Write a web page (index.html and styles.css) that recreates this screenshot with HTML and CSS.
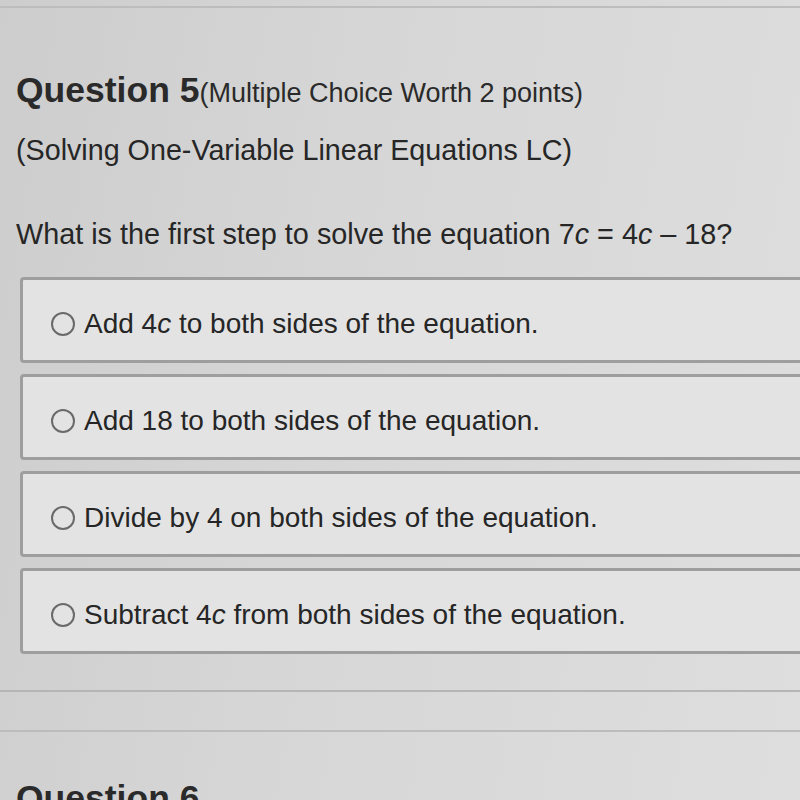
FILE: index.html
```html
<!DOCTYPE html>
<html lang="en">
<head>
  <meta charset="UTF-8">
  <title>Question 5</title>
  <link rel="stylesheet" href="styles.css">
</head>
<body>

  <div class="page">
    <div class="top-rule"></div>

    <div class="question">
      <h2 class="q-title">Question 5<span class="q-worth">(Multiple Choice Worth 2 points)</span></h2>
      <p class="q-topic">(Solving One-Variable Linear Equations LC)</p>

      <p class="q-text">What is the first step to solve the equation 7<i>c</i> = 4<i>c</i> &ndash; 18?</p>

      <div class="options">
        <label class="option">
          <span class="radio"></span>
          <span>Add 4<i>c</i> to both sides of the equation.</span>
        </label>
        <label class="option">
          <span class="radio"></span>
          <span>Add 18 to both sides of the equation.</span>
        </label>
        <label class="option">
          <span class="radio"></span>
          <span>Divide by 4 on both sides of the equation.</span>
        </label>
        <label class="option">
          <span class="radio"></span>
          <span>Subtract 4<i>c</i> from both sides of the equation.</span>
        </label>
      </div>
    </div>

    <!-- footer of the question card -->
    <div class="card-foot"></div>
    <div class="card-gap"></div>

    <h2 class="q-title next">Question 6</h2>
  </div>

</body>
</html>
```

FILE: styles.css
```css
html, body {
  margin: 0;
  height: 100%;
  overflow: hidden;
}
body {
  font-family: "Liberation Sans", Arial, sans-serif;
  color: #262626;
  background: linear-gradient(100deg, #cdcdcd 0%, #d6d6d6 40%, #dedede 100%);
}
.page {
  padding: 0 0 0 16px;
}
.top-rule {
  height: 6px;
  border-bottom: 2px solid #bdbdbd;
  margin-left: -16px;
}
.q-title {
  margin: 62px 0 0;
  font-size: 35.5px;
  font-weight: bold;
  line-height: 40px;
  color: #2a2a2a;
}
.q-worth {
  font-size: 27px;
  font-weight: normal;
}
.q-topic {
  margin: 20px 0 0;
  font-size: 28.7px;
  line-height: 34px;
}
.q-text {
  margin: 50px 0 0;
  font-size: 28.8px;
  line-height: 34px;
}
.options {
  margin: 26px -30px 0 4px;
  display: flex;
  flex-direction: column;
  gap: 11px;
}
.option {
  box-sizing: border-box;
  display: flex;
  align-items: center;
  gap: 9px;
  height: 86px;
  padding: 8px 0 0 28px;
  background: #e3e3e3;
  border: 3px solid #9e9e9e;
  border-radius: 4px;
  font-size: 28px;
}
.radio {
  width: 20px;
  height: 20px;
  border: 2.5px solid #6a6a6a;
  border-radius: 50%;
  flex: none;
}
.card-foot {
  height: 36px;
  border-bottom: 2px solid #b5b5b5;
  margin-left: -16px;
}
.card-gap {
  height: 38px;
  border-bottom: 2px solid #bcbcbc;
  margin-left: -16px;
}
.next {
  margin-top: 46px;
}
```
